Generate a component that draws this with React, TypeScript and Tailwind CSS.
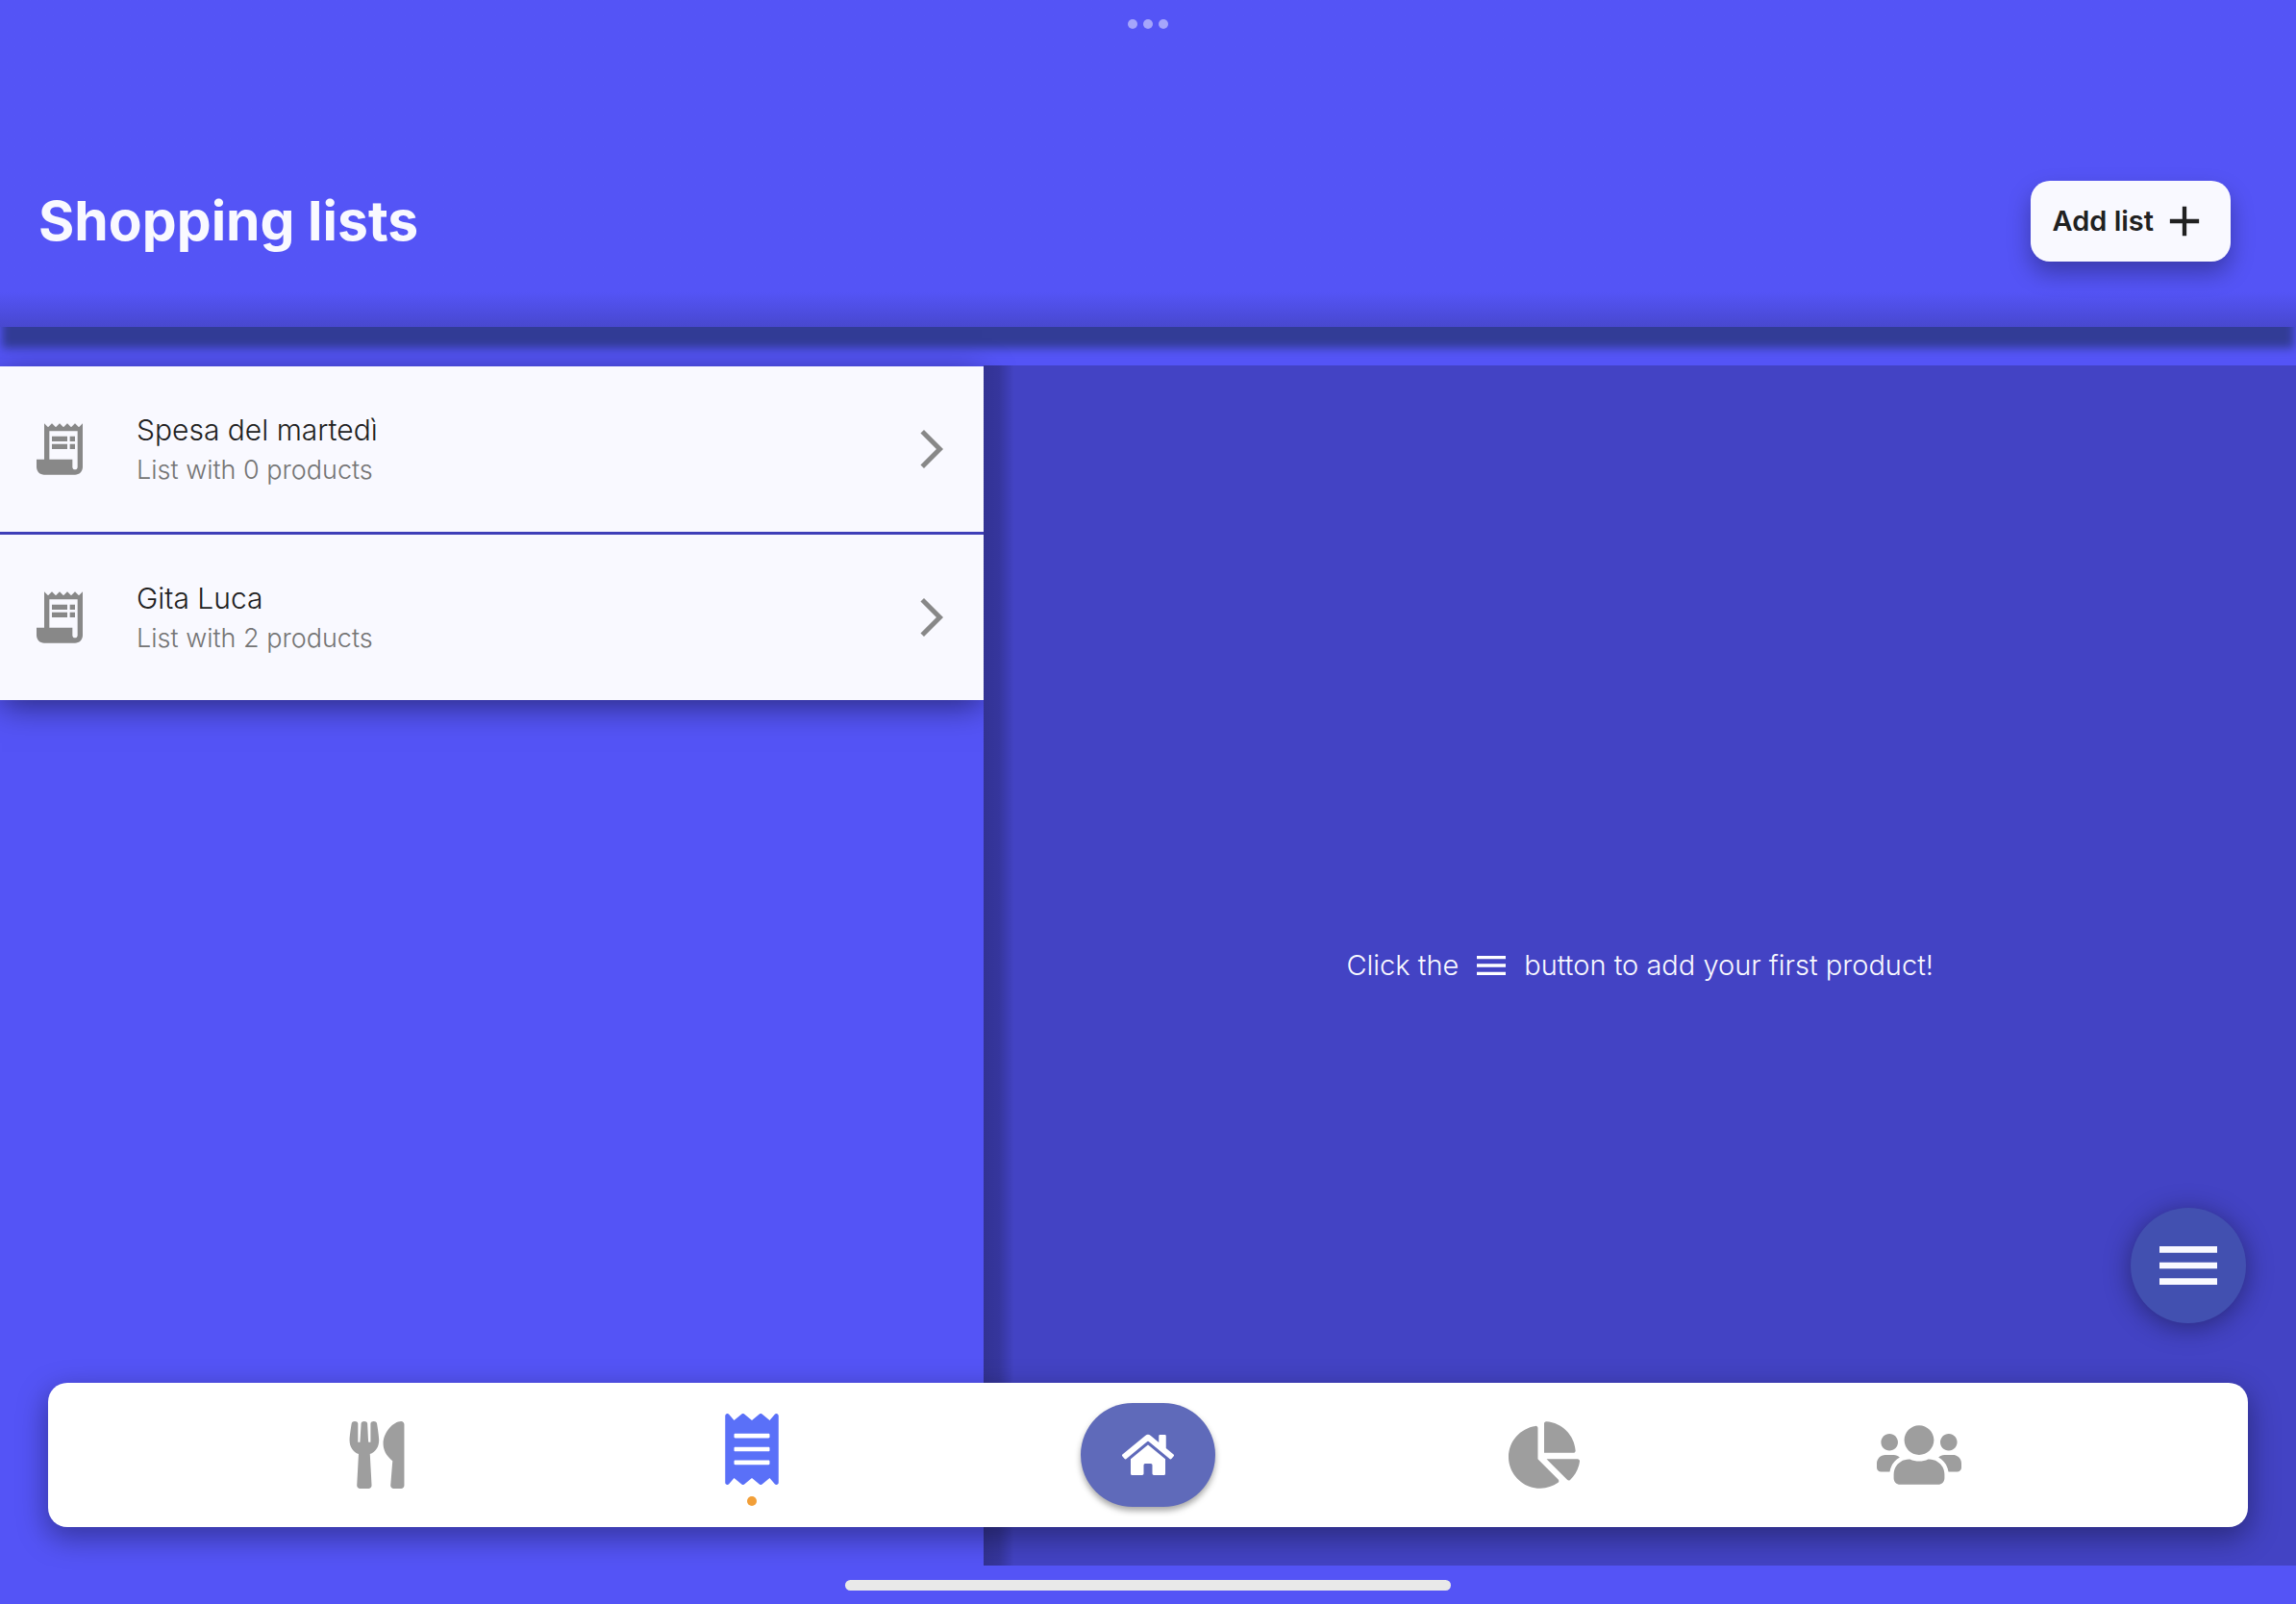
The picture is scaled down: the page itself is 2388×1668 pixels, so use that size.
import React from 'react';
import { FaUtensils, FaReceipt, FaHome, FaChartPie, FaUsers } from 'react-icons/fa';
import { MdReceiptLong, MdArrowForwardIos, MdAdd, MdMenu } from 'react-icons/md';

const lists = [
  { name: 'Spesa del martedì', products: 0 },
  { name: 'Gita Luca', products: 2 },
];

function Header() {
  return (
    <header className="flex h-[340px] flex-col bg-linear-to-t from-[#4848cf] via-[#5454f6] via-[36px] to-[#5454f6]">
      <div className="flex h-[120px] justify-center gap-1.5 pt-5">
        <span className="size-2.5 rounded-full bg-[#a5a5fb]" />
        <span className="size-2.5 rounded-full bg-[#a5a5fb]" />
        <span className="size-2.5 rounded-full bg-[#a5a5fb]" />
      </div>
      <div className="flex flex-1 items-center justify-between pr-[68px] pl-10">
        <h1 className="text-[57px] leading-[72px] font-bold text-[#f9f9ff]">Shopping lists</h1>
        <button
          type="button"
          className="flex h-[84px] items-center gap-1.5 rounded-[20px] bg-[#f9f9ff] px-[22px] text-[29px] font-semibold text-[#212121] shadow-[0_12px_24px_rgba(0,0,0,0.3)]"
        >
          Add list
          <MdAdd className="size-[52px]" />
        </button>
      </div>
    </header>
  );
}

function ListRow({ name, products }: { name: string; products: number }) {
  return (
    <li>
      <button type="button" className="flex h-[172px] w-full items-center bg-[#f9f9ff] px-[30px] text-left">
        <MdReceiptLong className="size-16 text-[#888888]" />
        <span className="ml-12 flex flex-1 flex-col">
          <span className="text-[30px] leading-[44px] font-light text-[#212121]">{name}</span>
          <span className="text-[27px] leading-[40px] font-light text-[#757575]">List with {products} products</span>
        </span>
        <MdArrowForwardIos className="size-12 text-[#888888]" />
      </button>
    </li>
  );
}

function NavBar() {
  return (
    <nav className="absolute inset-x-[50px] bottom-10 flex h-[150px] items-center justify-evenly rounded-[20px] bg-white text-[#9e9e9e] shadow-[0_10px_30px_2px_rgba(0,0,0,0.35)]">
      <button type="button" aria-label="Recipes" className="flex w-24 justify-center">
        <FaUtensils className="size-[70px]" />
      </button>
      <button type="button" aria-label="Lists" className="flex w-24 flex-col items-center gap-3 pt-2.5">
        <FaReceipt className="size-[74px] text-[#5a70f8]" />
        <span className="size-2.5 rounded-full bg-[#f29f38]" />
      </button>
      <button
        type="button"
        aria-label="Home"
        className="flex h-[108px] w-[140px] items-center justify-center rounded-[54px] bg-[#5f6aba] text-white shadow-[0_4px_6px_rgba(0,0,0,0.35)]"
      >
        <FaHome className="size-[54px]" />
      </button>
      <button type="button" aria-label="Statistics" className="flex w-24 justify-center">
        <FaChartPie className="size-[74px]" />
      </button>
      <button type="button" aria-label="Groups" className="flex w-24 justify-center">
        <FaUsers className="size-[88px]" />
      </button>
    </nav>
  );
}

export default function App() {
  return (
    <div className="flex min-h-screen flex-col bg-[#5454f6] font-['Inter',sans-serif]">
      <Header />
      <div className="h-10 overflow-hidden">
        <div className="mx-0.5 -mt-6 h-[46px] bg-[#323c96] blur-[5px]" />
      </div>
      <main className="relative grid flex-1 grid-cols-[3fr_4fr]">
        <ul className="mt-px flex flex-col gap-[3px] self-start bg-[#3f3fb8] shadow-[0_8px_32px_-2px_rgba(0,0,0,0.5)]">
          {lists.map((list) => (
            <ListRow key={list.name} name={list.name} products={list.products} />
          ))}
        </ul>
        <section className="relative flex items-center justify-center bg-[#4343c4]">
          <div className="absolute inset-y-0 left-0 w-8 bg-linear-to-r from-black/25 via-black/20 via-50% to-transparent" />
          <p className="flex items-center text-[29px] leading-9 font-light text-[#f9f9ff]">
            Click the
            <MdMenu className="mx-3.5 size-10 text-white" />
            button to add your first product!
          </p>
        </section>
        <button
          type="button"
          aria-label="Menu"
          className="absolute right-[52px] bottom-[252px] flex size-[120px] items-center justify-center rounded-full bg-[#4250b0] text-[#f9f9ff] shadow-[0_4px_28px_rgba(0,0,0,0.4)]"
        >
          <MdMenu className="size-20" />
        </button>
        <NavBar />
      </main>
      <footer className="flex h-10 items-center justify-center">
        <div className="h-[11px] w-[630px] rounded-full bg-[#e9e9e9]" />
      </footer>
    </div>
  );
}
